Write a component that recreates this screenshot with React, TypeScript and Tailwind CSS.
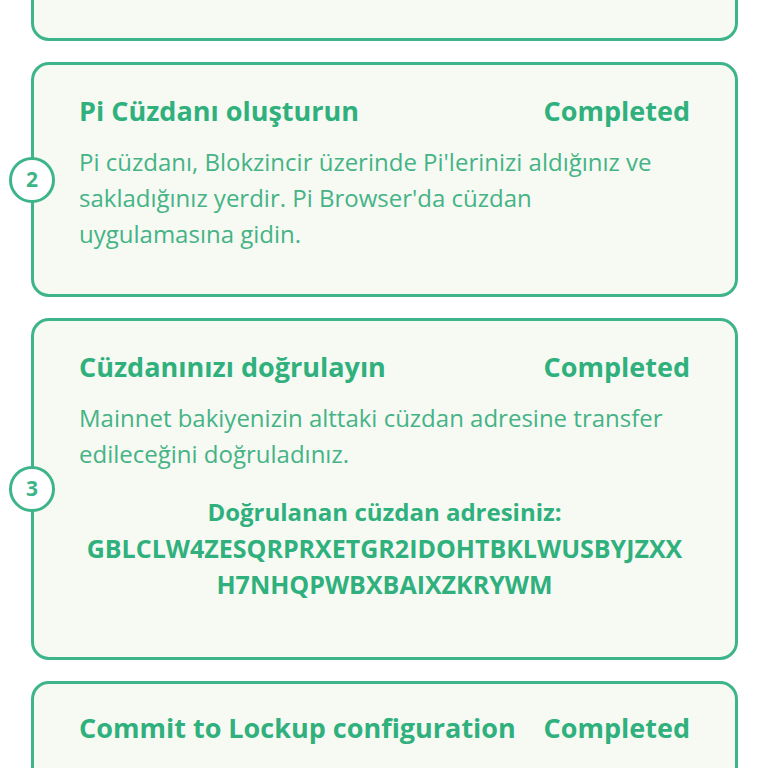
import React from 'react';

const font = { fontFamily: '"Open Sans", "Noto Sans", sans-serif' };

const StepCard = ({ step, children, className = '' }: { step?: number; children: React.ReactNode; className?: string }) => (
  <div className={`relative bg-[#f6faf3] border-[3px] border-[#3db489] rounded-[18px] ${className}`}>
    {step !== undefined && (
      <div className="absolute left-[-25px] top-1/2 -translate-y-1/2 w-[46px] h-[46px] rounded-full bg-white border-[3px] border-[#3db489] flex items-center justify-center text-[21px] font-bold text-[#3db489]">
        {step}
      </div>
    )}
    {children}
  </div>
);

const Header = ({ title }: { title: string }) => (
  <div className="flex items-center justify-between text-[27px] leading-[36px] font-bold text-[#2fb07d]">
    <span>{title}</span>
    <span>Completed</span>
  </div>
);

export default function App() {
  return (
    <div className="min-h-screen bg-white overflow-hidden" style={font}>
      <div className="flex flex-col gap-[21px] pl-[31px] pr-[30px]">
        <StepCard className="h-[120px] -mt-[79px]">
          <div />
        </StepCard>

        <StepCard step={2} className="px-[45px] pt-[28px] pb-[42px]">
          <Header title="Pi Cüzdanı oluşturun" />
          <p className="mt-[15px] text-[24px] leading-[36px] text-[#45b386]">
            Pi cüzdanı, Blokzincir üzerinde Pi'lerinizi aldığınız ve<br />
            sakladığınız yerdir. Pi Browser'da cüzdan<br />
            uygulamasına gidin.
          </p>
        </StepCard>

        <StepCard step={3} className="px-[40px] pt-[28px] pb-[55px]">
          <div className="px-[5px]">
            <Header title="Cüzdanınızı doğrulayın" />
            <p className="mt-[15px] text-[24px] leading-[36px] text-[#45b386]">
              Mainnet bakiyenizin alttaki cüzdan adresine transfer<br />
              edileceğini doğruladınız.
            </p>
          </div>
          <div className="mt-[22px] text-center leading-[36px] font-bold text-[#2fb07d]">
            <div className="text-[24px]">Doğrulanan cüzdan adresiniz:</div>
            <div className="text-[25px] whitespace-nowrap">GBLCLW4ZESQRPRXETGR2IDOHTBKLWUSBYJZXX</div>
            <div className="text-[25px]">H7NHQPWBXBAIXZKRYWM</div>
          </div>
        </StepCard>

        <StepCard className="px-[45px] pt-[26px] pb-[60px]">
          <Header title="Commit to Lockup configuration" />
          <p className="mt-[15px] text-[24px] leading-[36px] text-[#45b386]">
            &nbsp;
          </p>
        </StepCard>
      </div>
    </div>
  );
}
